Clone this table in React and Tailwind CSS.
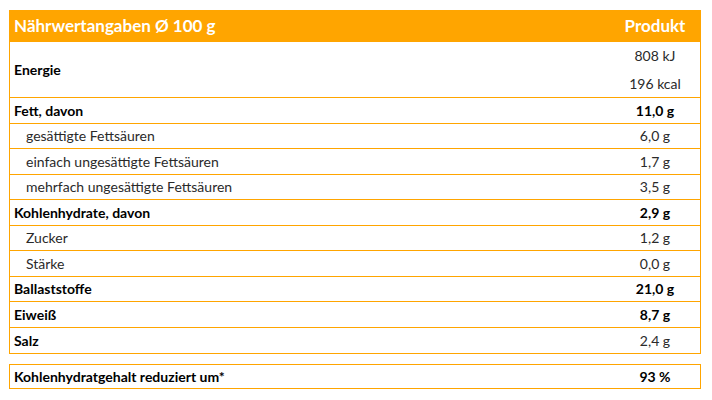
const ROWS = [
  { label: 'Fett, davon', value: '11,0 g', bold: true },
  { label: 'gesättigte Fettsäuren', value: '6,0 g', sub: true },
  { label: 'einfach ungesättigte Fettsäuren', value: '1,7 g', sub: true },
  { label: 'mehrfach ungesättigte Fettsäuren', value: '3,5 g', sub: true },
  { label: 'Kohlenhydrate, davon', value: '2,9 g', bold: true },
  { label: 'Zucker', value: '1,2 g', sub: true },
  { label: 'Stärke', value: '0,0 g', sub: true },
  { label: 'Ballaststoffe', value: '21,0 g', bold: true },
  { label: 'Eiweiß', value: '8,7 g', bold: true },
  { label: 'Salz', value: '2,4 g', bold: true, lightValue: true },
]

export default function App() {
  return (
    <div className="w-[712px] h-[400px] bg-white pt-[10px] px-[9px] font-['Lato',sans-serif] text-[14px]">
      <div className="w-[692px] border-x border-b border-[#ffa500]">
        {/* header */}
        <div className="h-[32px] bg-[#ffa500] flex items-center text-white font-bold text-[17px]">
          <div className="flex-1 pl-[4px]">Nährwertangaben Ø 100 g</div>
          <div className="w-[90px] text-center">Produkt</div>
        </div>

        {/* energie */}
        <div className="h-[56px] flex items-center border-b border-[#ffa500]">
          <div className="flex-1 pl-[4px] font-bold text-black">Energie</div>
          <div className="w-[90px] text-center text-[#2a2a2a] font-normal leading-[28px]">
            <div>808 kJ</div>
            <div>196 kcal</div>
          </div>
        </div>

        {ROWS.map((r, i) => (
          <div
            key={r.label}
            className={`h-[25.5px] flex items-center ${i < ROWS.length - 1 ? 'border-b border-[#ffa500]' : ''}`}
          >
            <div className={r.sub ? 'flex-1 pl-[16px] text-[#2a2a2a] font-normal' : 'flex-1 pl-[4px] font-bold text-black'}>
              {r.label}
            </div>
            <div className={r.sub || r.lightValue ? 'w-[90px] text-center text-[#2a2a2a] font-normal' : 'w-[90px] text-center font-bold text-black'}>
              {r.value}
            </div>
          </div>
        ))}
      </div>

      <div className="mt-[10px] w-[692px] h-[25px] border border-[#ffa500] flex items-center font-bold text-black">
        <div className="flex-1 pl-[4px]">Kohlenhydratgehalt reduziert um*</div>
        <div className="w-[90px] text-center">93 %</div>
      </div>
    </div>
  )
}
